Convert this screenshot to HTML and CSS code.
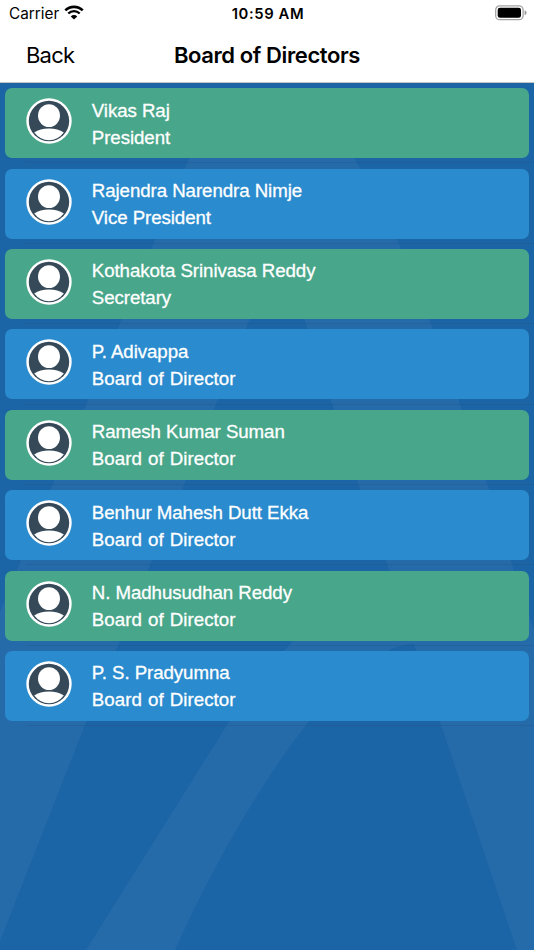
FILE: index.html
```
<!DOCTYPE html>
<html lang="en">
	<head>
		<meta charset="utf-8">
		<title>Board of Directors</title>
		<meta name="viewport" content="width=device-width, initial-scale=1">
		<link rel="stylesheet" href="styles.css">
	</head>
	<body>

		<!-- shared avatar -->
		<svg class="defs" width="0" height="0">
			<symbol id="avatar" viewBox="0 0 46 46">
				<circle cx="23" cy="23" r="22.7" fill="#fff"/>
				<circle cx="23" cy="23" r="20.2" fill="#364958"/>
				<ellipse cx="23" cy="17.6" rx="11" ry="11.4" fill="#fff"/>
				<path d="M8.2 34.6Q14 30.6 23 30.6T37.8 34.6Q32 42.2 23 42.2T8.2 34.6Z" fill="#fff"/>
			</symbol>
		</svg>

		<div class="statusBar">
			<div class="carrier">
				<span>Carrier</span>
				<svg class="wifi" width="20" height="15" viewBox="0 0 20 15">
					<path d="M1.3 5.4A12.4 12.4 0 0 1 18.7 5.4" fill="none" stroke="#000" stroke-width="2.6"/>
					<path d="M4.3 8.5A8.1 8.1 0 0 1 15.7 8.5" fill="none" stroke="#000" stroke-width="2.4"/>
					<path d="M10 14.6L6.8 11.4A4.6 4.6 0 0 1 13.2 11.4Z"/>
				</svg>
			</div>
			<div class="time">10:59 AM</div>
			<div class="power">
				<svg width="32" height="16" viewBox="0 0 32 16">
					<rect x="0.7" y="0.9" width="27.4" height="13.8" rx="4" fill="none" stroke="#a3a3a3" stroke-width="1.3"/>
					<rect x="2.7" y="2.8" width="23.3" height="10" rx="2.3"/>
					<path d="M29.6 5.3Q31.6 6.2 31.6 7.8T29.6 10.3Z" fill="#999"/>
				</svg>
			</div>
		</div>

		<div class="navBar">
			<div class="back">Back</div>
			<div class="title">Board of Directors</div>
		</div>

		<div class="content">
			<svg class="backdrop" width="534" height="867" viewBox="0 83 534 867">
				<path d="M0 612L21 560L185 168L206 120H332L360 168L397 239L434 331L463 413L491 495L516 577L534 630V950H517L441 725L414 644Q399 644 383 653C356 670 330 694 306 725C260 785 217 858 175 950H86L227 725C247 693 263 671 282 653L291 643C315 619 345 600 393 582L386 560L362 495L335 413L305 321L277 256L249 321L212.500 413L180 495L147.500 571L115 653L85 725L0 941Z" fill="#256baa"/>
			</svg>

			<div class="list">
				<div class="row">
					<div class="card green">
						<svg class="avatar"><use href="#avatar"/></svg>
						<div class="info">Vikas Raj<br/>President</div>
					</div>
				</div>
				<div class="row">
					<div class="card blue">
						<svg class="avatar"><use href="#avatar"/></svg>
						<div class="info">Rajendra Narendra Nimje<br/>Vice President</div>
					</div>
				</div>
				<div class="row">
					<div class="card green">
						<svg class="avatar"><use href="#avatar"/></svg>
						<div class="info">Kothakota Srinivasa Reddy<br/>Secretary</div>
					</div>
				</div>
				<div class="row">
					<div class="card blue">
						<svg class="avatar"><use href="#avatar"/></svg>
						<div class="info">P. Adivappa<br/><span class="member">Board of Director</span></div>
					</div>
				</div>
				<div class="row">
					<div class="card green">
						<svg class="avatar"><use href="#avatar"/></svg>
						<div class="info">Ramesh Kumar Suman<br/><span class="member">Board of Director</span></div>
					</div>
				</div>
				<div class="row">
					<div class="card blue">
						<svg class="avatar"><use href="#avatar"/></svg>
						<div class="info">Benhur Mahesh Dutt Ekka<br/><span class="member">Board of Director</span></div>
					</div>
				</div>
				<div class="row">
					<div class="card green">
						<svg class="avatar"><use href="#avatar"/></svg>
						<div class="info">N. Madhusudhan Reddy<br/><span class="member">Board of Director</span></div>
					</div>
				</div>
				<div class="row">
					<div class="card blue">
						<svg class="avatar"><use href="#avatar"/></svg>
						<div class="info">P. S. Pradyumna<br/><span class="member">Board of Director</span></div>
					</div>
				</div>
			</div>
		</div>

	</body>
</html>
```
FILE: styles.css
```
* { box-sizing: border-box; }

body
{
	margin: 0;
	height: 100vh;
	display: flex;
	flex-direction: column;
	overflow: hidden;
	background-color: #1b64a5;
	font-family: Inter, sans-serif;
	color: #000;
}

svg { display: block; }

.defs { position: absolute; }

.statusBar
{
	display: grid;
	grid-template-columns: 1fr auto 1fr;
	align-items: center;
	height: 27px;
	padding: 0 7px 0 9px;
	background-color: #fff;
	font-size: 15.3px;
}

.carrier
{
	display: flex;
	align-items: center;
	gap: 5px;
}

.wifi { margin-top: -2px; }

.time
{
	font-weight: 600;
	font-size: 14.8px;
	letter-spacing: 0.6px;
}

.power
{
	display: flex;
	justify-content: flex-end;
	margin-top: -1px;
}

.navBar
{
	display: grid;
	grid-template-columns: 1fr auto 1fr;
	align-items: center;
	height: 56px;
	padding: 0 26px;
	background-color: #fff;
	border-bottom: 1px solid #c4c4c6;
}

.back
{
	font-size: 22px;
	letter-spacing: -0.8px;
}

.title
{
	font-size: 22px;
	font-weight: 600;
	letter-spacing: -0.4px;
}

.content
{
	position: relative;
	flex: 1;
}

/* faint watermark behind the list */
.backdrop
{
	position: absolute;
	left: 0;
	top: 0;
}

.list { position: relative; }

.row
{
	height: 80.4px;
	padding: 5.2px 5.3px;
	background: linear-gradient(rgba(40, 80, 130, 0.3), rgba(40, 80, 130, 0.3)) 26px 100% / 100% 1px no-repeat;
}

.card
{
	display: flex;
	align-items: center;
	height: 70px;
	padding-left: 20.4px;
	border-radius: 7px;
}

.green { background-color: #48a68a; }
.blue { background-color: #2a8bce; }

.avatar
{
	width: 46px;
	height: 46px;
	margin-top: -4px;
}

.info
{
	margin: 1px 0 0 20.1px;
	color: #fff;
	font-family: "Liberation Sans", Arial, sans-serif;
	font-size: 18.7px;
	line-height: 27px;
	letter-spacing: -0.07px;
	-webkit-text-stroke: 0.3px #fff;
}

.member
{
	letter-spacing: 0.05px;
	word-spacing: 0.8px;
}
```
